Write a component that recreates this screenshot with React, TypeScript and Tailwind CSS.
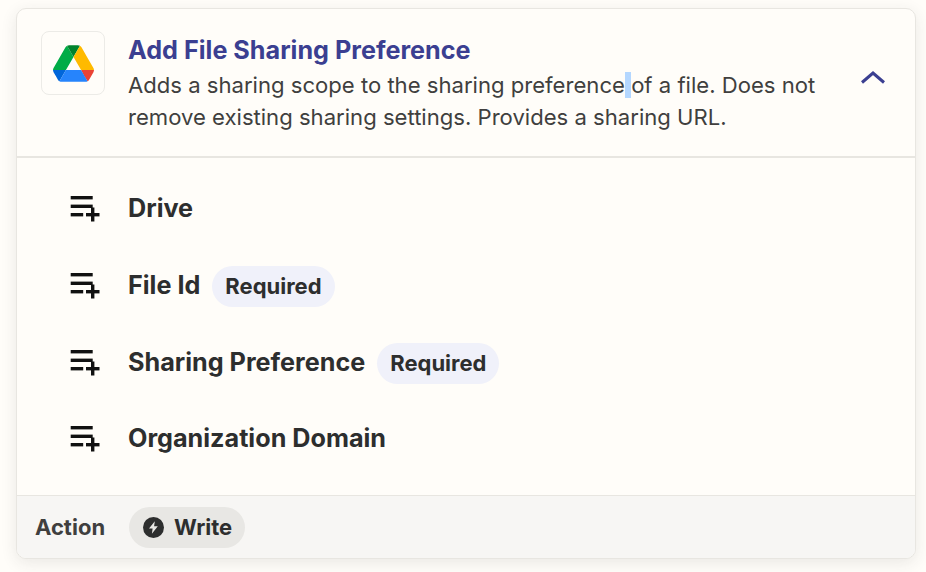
const fields = [
  { label: "Drive", required: false },
  { label: "File Id", required: true },
  { label: "Sharing Preference", required: true },
  { label: "Organization Domain", required: false },
];

const DriveLogo = () => (
  <svg viewBox="0 0 87.3 78" className="h-[37px] w-[41px]">
    <path d="m6.6 66.85 3.85 6.65c.8 1.4 1.95 2.5 3.3 3.3l13.75-23.8h-27.5c0 1.55.4 3.1 1.2 4.5z" fill="#0066da" />
    <path d="m43.65 25-13.75-23.8c-1.35.8-2.5 1.9-3.3 3.3l-25.4 44a9.06 9.06 0 0 0 -1.2 4.5h27.5z" fill="#00ac47" />
    <path d="m73.55 76.8c1.35-.8 2.5-1.9 3.3-3.3l1.6-2.75 7.65-13.25c.8-1.4 1.2-2.95 1.2-4.5h-27.502l5.852 11.5z" fill="#ea4335" />
    <path d="m43.65 25 13.75-23.8c-1.35-.8-2.9-1.2-4.5-1.2h-18.5c-1.6 0-3.15.45-4.5 1.2z" fill="#00832d" />
    <path d="m59.8 53h-32.3l-13.75 23.8c1.35.8 2.9 1.2 4.5 1.2h50.8c1.6 0 3.15-.45 4.5-1.2z" fill="#2684fc" />
    <path d="m73.4 26.5-12.7-22c-.8-1.4-1.95-2.5-3.3-3.3l-13.75 23.8 16.15 28h27.45c0-1.55-.4-3.1-1.2-4.5z" fill="#ffba00" />
  </svg>
);

const AddFieldIcon = () => (
  <svg viewBox="0 0 30 26" className="h-[26px] w-[30px] shrink-0" fill="#111111">
    <rect x="0.7" y="0" width="22" height="3.4" />
    <rect x="0.7" y="8.6" width="22" height="3.4" />
    <rect x="0.7" y="17" width="12.5" height="3.4" />
    <rect x="16" y="17" width="13.5" height="3.4" />
    <rect x="21" y="11.5" width="3.4" height="14" />
  </svg>
);

const BoltIcon = () => (
  <svg viewBox="0 0 21 21" className="h-[21px] w-[21px]">
    <circle cx="10.5" cy="10.5" r="10.5" fill="#2d2e2e" />
    <path d="M11.8 4.2 6 11.6h3.6l-.7 5.2 5.9-7.5h-3.7z" fill="#e8e7e4" />
  </svg>
);

export default function App() {
  return (
    <div className="min-h-[572px] bg-[#fffdf9] px-4 pt-2 font-['Inter',sans-serif]">
      <div className="h-[551px] w-[900px] overflow-hidden rounded-[10px] border border-[#e8e6e1] bg-[#fffdf9] shadow-[0_4px_16px_rgba(45,46,46,0.1)]">
        <div className="flex h-[149px] border-b-2 border-[#e8e6e1] pt-[22px] pl-6">
          <div className="flex size-16 shrink-0 items-center justify-center rounded-lg border border-[#ecebe7]">
            <DriveLogo />
          </div>
          <div className="mt-px ml-[23px] w-[701px]">
            <h2 className="text-[25.2px] leading-[37px] font-bold text-[#3b3f91]">
              Add File Sharing Preference
            </h2>
            <p className="text-[22.1px] leading-8 text-[#403f3e]">
              Adds a sharing scope to the sharing preference<span className="bg-[#b4d7ff]"> </span>of a file. Does not remove existing sharing settings. Provides a sharing URL.
            </p>
          </div>
          <svg viewBox="0 0 24 14" className="mt-[39px] ml-[32px] h-[14px] w-6" fill="none" stroke="#3b3f91" strokeWidth="3">
            <path d="M1 12.5 12 3 23 12.5" />
          </svg>
        </div>
        <div className="flex h-[337px] flex-col pt-3 pl-[53px]">
          {fields.map((field) => (
            <div key={field.label} className="flex h-[77px] shrink-0 items-center last:-mt-px">
              <AddFieldIcon />
              <span className="ml-7 text-[25.2px] font-bold text-[#2d2e2e]">{field.label}</span>
              {field.required && (
                <span className="mt-px ml-3 flex h-[41px] items-center rounded-full bg-[#f0f1fa] px-[13px] text-[22px] font-bold text-[#2d2e2e]">
                  Required
                </span>
              )}
            </div>
          ))}
        </div>
        <div className="flex h-[64px] items-center border-t border-[#e8e6e1] bg-[#f7f6f4] pl-[18px]">
          <span className="text-[22px] font-bold text-[#403f3e]">Action</span>
          <span className="ml-6 flex h-[41px] items-center gap-2.5 rounded-full bg-[#e8e7e4] pr-[13px] pl-[14px] text-[22px] font-bold text-[#2d2e2e]">
            <BoltIcon />
            Write
          </span>
        </div>
      </div>
    </div>
  );
}
